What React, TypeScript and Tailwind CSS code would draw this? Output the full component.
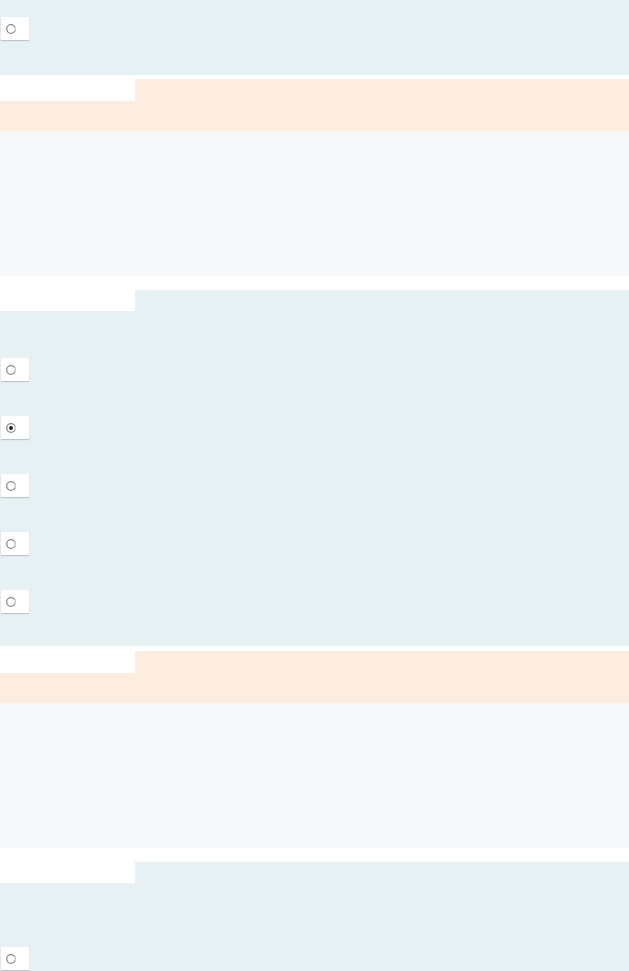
import React from "react";

function Radio({ checked = false }: { checked?: boolean }) {
  return (
    <div className="ml-px flex h-[23px] w-[28px] items-center bg-white pl-[4px] shadow-[0_1px_1px_rgba(0,0,0,0.18)]">
      <svg width="12" height="12" viewBox="0 0 12 12">
        <circle cx="6" cy="6" r="4.3" fill="#fff" stroke="#8a8a8a" strokeWidth="1.3" />
        <path d="M9.6 4.2 A4.3 4.3 0 0 1 9.9 7.6" stroke="#e6e6e6" strokeWidth="1.4" fill="none" />
        {checked && <circle cx="6" cy="6" r="2" fill="#222" />}
      </svg>
    </div>
  );
}

function Tab() {
  return <div className="h-[22px] w-[135px] bg-white" />;
}

export default function App() {
  return (
    <div className="w-[629px] bg-white font-['Liberation_Sans',sans-serif]">
      {/* Section A */}
      <div className="h-[75px] bg-[#e6f1f4] pt-[17px]">
        <Radio />
      </div>
      <div className="h-[4px]" />
      {/* Section B */}
      <div className="h-[52px] bg-[#fcedde]">
        <Tab />
      </div>
      {/* Section C */}
      <div className="h-[145px] bg-[#f6f8f9]" />
      <div className="h-[14px]" />
      {/* Section D */}
      <div className="h-[356px] bg-[#e6f1f4]">
        <div className="h-[21px] w-[135px] bg-white" />
        <div className="flex flex-col gap-[35px] pt-[47px]">
          <Radio />
          <Radio checked />
          <Radio />
          <Radio />
          <Radio />
        </div>
      </div>
      <div className="h-[5px]" />
      {/* Section E */}
      <div className="h-[52px] bg-[#fcedde]">
        <Tab />
      </div>
      {/* Section F */}
      <div className="h-[145px] bg-[#f6f8f9]" />
      <div className="h-[14px]" />
      {/* Section G */}
      <div className="h-[160px] bg-[#e6f1f4]">
        <div className="h-[21px] w-[135px] bg-white" />
        <div className="pt-[64px]">
          <Radio />
        </div>
      </div>
    </div>
  );
}
